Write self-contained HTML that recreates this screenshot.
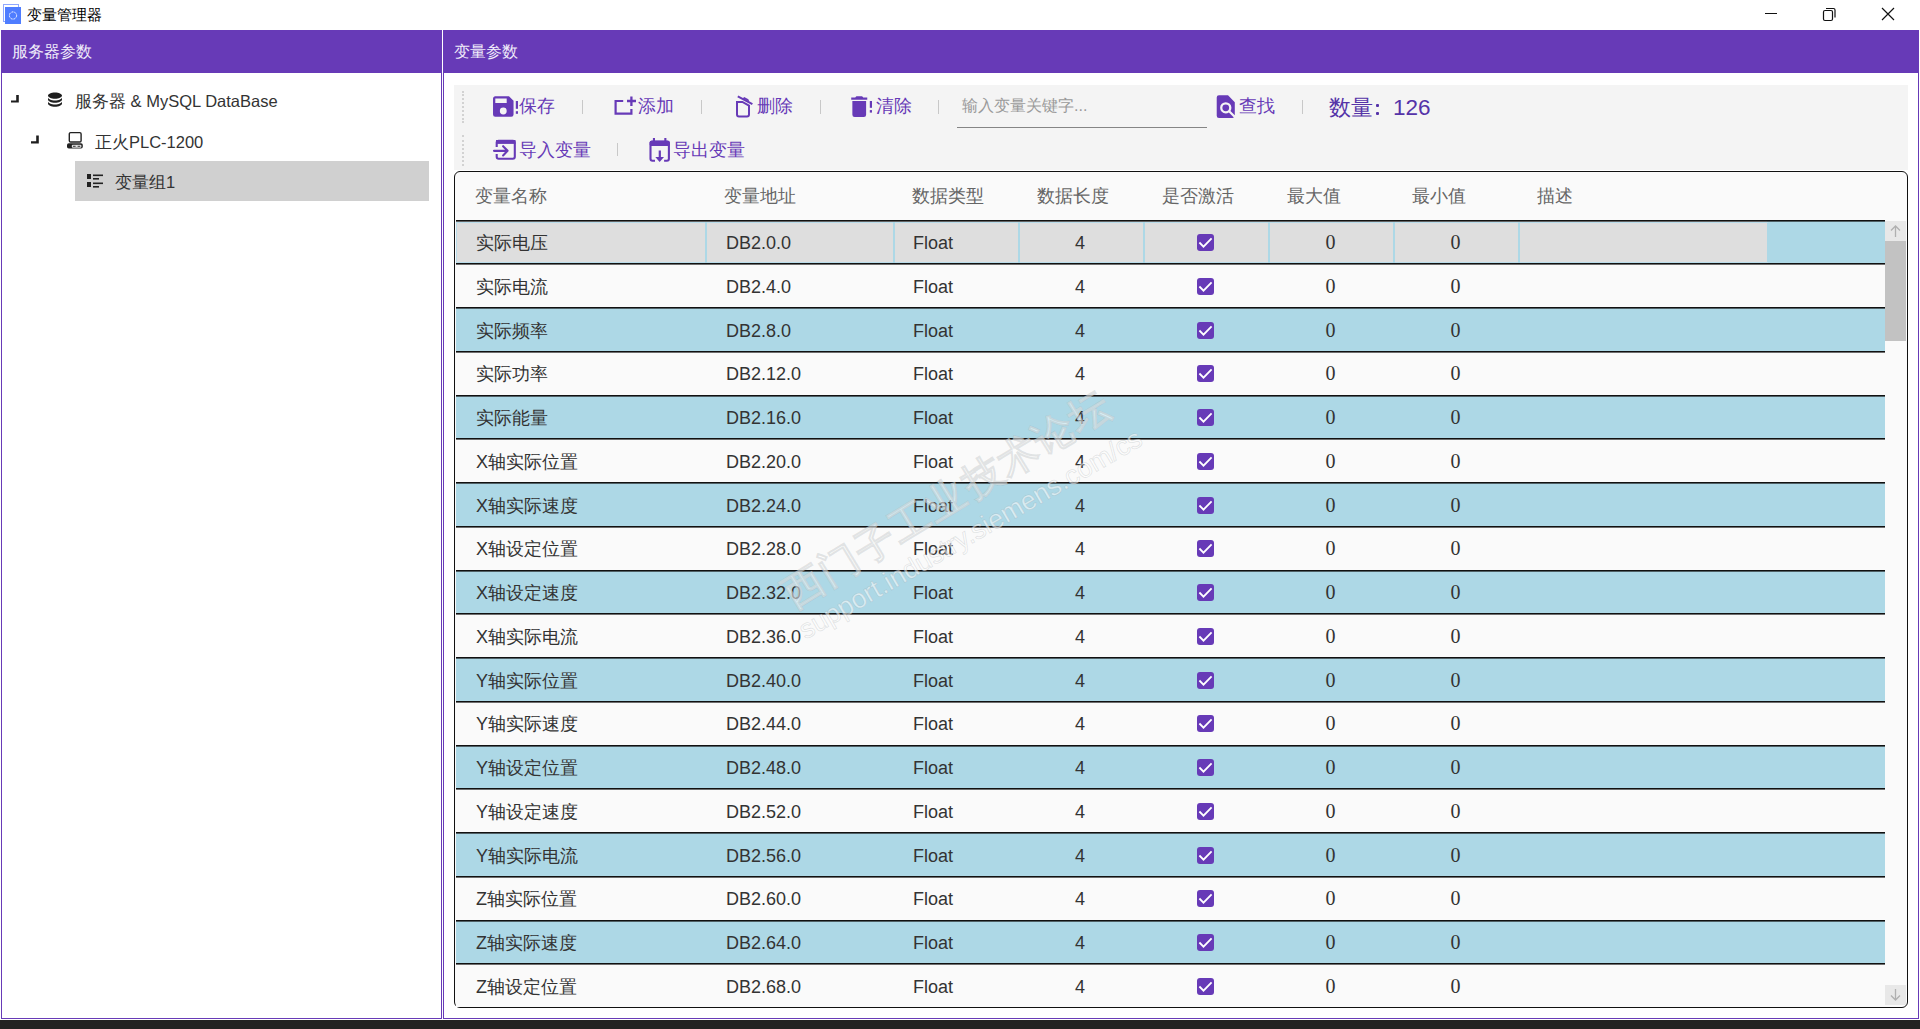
<!DOCTYPE html><html><head><meta charset="utf-8"><title>变量管理器</title><style>
*{margin:0;padding:0;box-sizing:border-box}
html,body{width:1920px;height:1029px;overflow:hidden;background:#fff;font-family:"Liberation Sans",sans-serif;position:relative}
.a{position:absolute}
.t{position:absolute;white-space:nowrap;line-height:1}
.row{position:absolute;left:456px;width:1429px;height:44px}
.ln{position:absolute;left:0;top:0;width:1429px;height:2px;background:linear-gradient(#111 50%,rgba(17,17,17,.6) 50%)}
.cell{position:absolute;white-space:nowrap;line-height:1;font-size:18px;color:#333}
.num{position:absolute;white-space:nowrap;line-height:1;font-family:"Liberation Serif",serif;font-size:20px;color:#333}
.chk{position:absolute;width:17px;height:17px;background:#673AB7;border-radius:3px}
.tb{position:absolute;white-space:nowrap;line-height:1;font-size:18px;color:#673AB7}
.sep{position:absolute;width:1px;height:14px;background:#c8c8c8}
.ic{position:absolute;left:0;top:0;overflow:visible}
</style></head><body>
<div class="a" style="left:3px;top:4px;width:16px;height:18px;border:1px solid #8fa8ff;background:#fff"></div>
<div class="a" style="left:5px;top:7px;width:16px;height:17px;background:#4f7dff"></div>
<svg class="a" style="left:8px;top:10px" width="10" height="11" viewBox="0 0 10 11"><circle cx="5" cy="5.5" r="3.6" fill="none" stroke="#fff" stroke-width="1" stroke-dasharray="2 1"/></svg>
<div class="t" style="left:27px;top:6.5px;font-size:15px;color:#000">变量管理器</div>
<div class="a" style="left:1765px;top:13px;width:12px;height:1px;background:#111"></div>
<svg class="a" style="left:1822px;top:6.5px" width="15" height="15" viewBox="0 0 15 15"><rect x="1.5" y="3.5" width="9" height="10" rx="1.5" fill="none" stroke="#111" stroke-width="1.2"/><path d="M4 1.5H11.5A1.5 1.5 0 0 1 13 3V10.5" fill="none" stroke="#111" stroke-width="1.2"/></svg>
<svg class="a" style="left:1881px;top:7px" width="14" height="14" viewBox="0 0 14 14"><path d="M1 1L13 13M13 1L1 13" stroke="#111" stroke-width="1.2"/></svg>
<div class="a" style="left:1px;top:30px;width:441px;height:989px;border:1px solid #673AB7;border-top:0"></div>
<div class="a" style="left:1px;top:30px;width:441px;height:43px;background:#673AB7"></div>
<div class="t" style="left:12px;top:44px;font-size:16px;color:#f0ecfa">服务器参数</div>
<div class="a" style="left:443px;top:30px;width:1476px;height:989px;border:1px solid #673AB7;border-top:0;border-left:1.5px solid #673AB7"></div>
<div class="a" style="left:443px;top:30px;width:1476px;height:43px;background:#673AB7"></div>
<div class="t" style="left:454px;top:44px;font-size:16px;color:#f0ecfa">变量参数</div>
<div class="a" style="left:0;top:1020px;width:1920px;height:9px;background:#222"></div>
<svg class="a" style="left:0;top:0" width="50" height="150" viewBox="0 0 50 150"><path fill="#1e1e1e" d="M11 100.4H16.2V95H18.8V102.6H11Z M31 141.2H36.2V135.6H38.8V143.4H31Z"/></svg>
<svg class="a" style="left:0;top:0" width="120" height="120" viewBox="0 0 120 120"><g transform="translate(44.5 90) scale(0.875 0.8)"><path fill="#1e1e1e" d="M12,3C7.58,3 4,4.79 4,7C4,9.21 7.58,11 12,11C16.42,11 20,9.21 20,7C20,4.79 16.42,3 12,3M4,9V12C4,14.21 7.58,16 12,16C16.42,16 20,14.21 20,12V9C20,11.21 16.42,13 12,13C7.58,13 4,11.21 4,9M4,14V17C4,19.21 7.58,21 12,21C16.42,21 20,19.21 20,17V14C20,16.21 16.42,18 12,18C7.58,18 4,16.21 4,14Z"/></g></svg>
<div class="t" style="left:75px;top:93px;font-size:16.5px;color:#333">服务器 &amp; MySQL DataBase</div>
<svg class="a" style="left:67px;top:131px" width="17" height="19" viewBox="0 0 17 19"><rect x="2.3" y="1.6" width="11.8" height="9.4" rx="1.3" fill="none" stroke="#222" stroke-width="1.4"/><rect x="0" y="12.3" width="15.8" height="5.3" rx="1.8" fill="#222"/><rect x="4.8" y="13.8" width="9.6" height="2.9" rx="1" fill="#e0e0e0"/><rect x="6" y="14.8" width="2.6" height="1" fill="#333"/><rect x="10.6" y="14.8" width="2.6" height="1" fill="#333"/></svg>
<div class="t" style="left:95px;top:134px;font-size:16.5px;color:#333">正火PLC-1200</div>
<div class="a" style="left:75px;top:161px;width:354px;height:40px;background:#d0d0d0"></div>
<svg class="a" style="left:86px;top:173px" width="18" height="16" viewBox="0 0 18 16"><rect x="1" y="1" width="4" height="5" fill="#222"/><rect x="1" y="9" width="4" height="5" fill="#222"/><rect x="7" y="1.5" width="10" height="1.6" fill="#222"/><rect x="7" y="5" width="6" height="1.6" fill="#222"/><rect x="7" y="9.5" width="10" height="1.6" fill="#222"/><rect x="7" y="13" width="6" height="1.6" fill="#222"/></svg>
<div class="t" style="left:115px;top:174px;font-size:16.5px;color:#333">变量组1</div>
<div class="a" style="left:454px;top:85px;width:1454px;height:85px;background:#f4f4f4"></div>
<div class="a" style="left:462px;top:91px;width:2px;height:32px;border-left:2px dotted #d2d2d2"></div>
<div class="a" style="left:462px;top:135px;width:2px;height:31px;border-left:2px dotted #d2d2d2"></div>
<svg class="ic" width="1920" height="200" viewBox="0 0 1920 200"><g transform="translate(489.6 92.8) scale(1.14)"><path fill="#673AB7" d="M15,9H5V5H15M12,19A3,3 0 0,1 9,16A3,3 0 0,1 12,13A3,3 0 0,1 15,16A3,3 0 0,1 12,19M17,3H5C3.89,3 3,3.9 3,5V19A2,2 0 0,0 5,21H19A2,2 0 0,0 21,19V7L17,3Z"/></g><rect x="515.8" y="101" width="2.2" height="7.8" fill="#673AB7"/><rect x="515.8" y="111.2" width="2.2" height="2.6" fill="#673AB7"/><path d="M623.2 101H615.6V113.7H631.4V109" fill="none" stroke="#673AB7" stroke-width="2.2"/><path d="M627 101H636M631.4 96.4V105.9" fill="none" stroke="#673AB7" stroke-width="2.3"/><path d="M737 102H742.4L749 105.7V114.5A2 2 0 0 1 747 116.5H739A2 2 0 0 1 737 114.5Z" fill="none" stroke="#673AB7" stroke-width="2"/><path d="M737.8 96.4L752.4 104.2" stroke="#673AB7" stroke-width="2"/><path d="M742.6 98.4L744.2 97.1L748.4 99.3L749.4 101.8Z" fill="#673AB7"/><g transform="translate(845.5 92.9) scale(1.145)"><path fill="#673AB7" d="M19,4H15.5L14.5,3H9.5L8.5,4H5V6H19M6,19A2,2 0 0,0 8,21H16A2,2 0 0,0 18,19V7H6V19Z"/></g><rect x="869.8" y="101" width="2.2" height="6.8" fill="#673AB7"/><rect x="869.8" y="110.1" width="2.2" height="2.5" fill="#673AB7"/><g transform="translate(1212.2 93.1) scale(1.13)"><path fill="#673AB7" d="M9,13A3,3 0 0,0 12,16A3,3 0 0,0 15,13A3,3 0 0,0 12,10A3,3 0 0,0 9,13M20,19.59V8L14,2H6A2,2 0 0,0 4,4V20A2,2 0 0,0 6,22H18C18.45,22 18.85,21.85 19.19,21.6L14.76,17.17C13.96,17.69 13,18 12,18A5,5 0 0,1 7,13A5,5 0 0,1 12,8A5,5 0 0,1 17,13C17,14 16.69,14.96 16.17,15.75L20,19.59Z"/></g><path d="M496.7 147.1V142A2 2 0 0 1 498.7 140.7H512.8A2 2 0 0 1 514.8 142.7V156.7A2 2 0 0 1 512.8 158.7H498.7A2 2 0 0 1 496.7 156.7V154.1" fill="none" stroke="#673AB7" stroke-width="2.1"/><rect x="496" y="140" width="19.5" height="3.9" fill="#673AB7"/><path d="M494 150.85H507M503.1 146.2L507.6 150.85L503.1 155.4" fill="none" stroke="#673AB7" stroke-width="2.1" stroke-linecap="round" stroke-linejoin="round"/><path d="M655 160.8H652.5A2 2 0 0 1 650.5 158.8V143.5A2 2 0 0 1 652.5 141.5H666.9A2 2 0 0 1 668.9 143.5V158.8A2 2 0 0 1 666.9 160.8H664.1" fill="none" stroke="#673AB7" stroke-width="2.1"/><rect x="649.7" y="140.8" width="20" height="5.2" rx="1.5" fill="#673AB7"/><rect x="652.9" y="138" width="2.1" height="3.5" fill="#673AB7"/><rect x="664.3" y="138" width="2.1" height="3.5" fill="#673AB7"/><rect x="658.7" y="150.5" width="2.2" height="7.5" fill="#673AB7"/><path d="M655.3 157.1H664L659.65 161.9Z" fill="#673AB7"/></svg>
<div class="tb" style="left:519px;top:97px">保存</div>
<div class="sep" style="left:582px;top:100px"></div>
<div class="tb" style="left:638px;top:97px">添加</div>
<div class="sep" style="left:701px;top:100px"></div>
<div class="tb" style="left:757px;top:97px">删除</div>
<div class="sep" style="left:820px;top:100px"></div>
<div class="tb" style="left:875.5px;top:97px">清除</div>
<div class="sep" style="left:938px;top:100px"></div>
<div class="t" style="left:962px;top:98px;font-size:16px;color:#9a9a9a">输入变量关键字...</div>
<div class="a" style="left:957px;top:126.5px;width:250px;height:1.5px;background:#858585"></div>
<div class="tb" style="left:1239px;top:97px">查找</div>
<div class="sep" style="left:1302px;top:100px"></div>
<div class="tb" style="left:1329px;top:97.5px;font-size:21.5px;color:#5533a8">数量</div>
<div class="a" style="left:1375.8px;top:104px;width:3px;height:3px;border-radius:1px;background:#5533a8"></div>
<div class="a" style="left:1375.8px;top:112px;width:3px;height:3px;border-radius:1px;background:#5533a8"></div>
<div class="tb" style="left:1393px;top:97px;font-size:22.5px;color:#5533a8">126</div>
<div class="tb" style="left:519px;top:141px">导入变量</div>
<div class="sep" style="left:617px;top:143px;height:13px"></div>
<div class="tb" style="left:673px;top:141px">导出变量</div>
<div class="a" style="left:454px;top:171px;width:1454px;height:837px;border:1.4px solid #111;border-radius:6px;background:#fafafa"></div>
<div class="t" style="left:475px;top:187px;font-size:18px;color:#666">变量名称</div>
<div class="t" style="left:724px;top:187px;font-size:18px;color:#666">变量地址</div>
<div class="t" style="left:912px;top:187px;font-size:18px;color:#666">数据类型</div>
<div class="t" style="left:1037px;top:187px;font-size:18px;color:#666">数据长度</div>
<div class="t" style="left:1162px;top:187px;font-size:18px;color:#666">是否激活</div>
<div class="t" style="left:1287px;top:187px;font-size:18px;color:#666">最大值</div>
<div class="t" style="left:1412px;top:187px;font-size:18px;color:#666">最小值</div>
<div class="t" style="left:1537px;top:187px;font-size:18px;color:#666">描述</div>
<div class="row" style="top:219.50px;background:#dedede">
<div class="a" style="left:1311px;top:0;width:118px;height:44px;background:#add8e6"></div>
<div class="a" style="left:0;top:2px;width:1312px;height:1px;background:#b9dcea"></div>
<div class="a" style="left:0;top:42px;width:1312px;height:1px;background:#b9dcea"></div>
<div class="a" style="left:0;top:2px;width:1px;height:41px;background:#b9dcea"></div>
<div class="a" style="left:248.5px;top:2px;width:2px;height:41px;background:#add8e6"></div>
<div class="a" style="left:436.5px;top:2px;width:2px;height:41px;background:#add8e6"></div>
<div class="a" style="left:561.5px;top:2px;width:2px;height:41px;background:#add8e6"></div>
<div class="a" style="left:686.5px;top:2px;width:2px;height:41px;background:#add8e6"></div>
<div class="a" style="left:811.5px;top:2px;width:2px;height:41px;background:#add8e6"></div>
<div class="a" style="left:936.5px;top:2px;width:2px;height:41px;background:#add8e6"></div>
<div class="a" style="left:1061.5px;top:2px;width:2px;height:41px;background:#add8e6"></div>
<div class="ln"></div>
<div class="cell" style="left:20px;top:14.5px">实际电压</div>
<div class="cell" style="left:270px;top:14.5px">DB2.0.0</div>
<div class="cell" style="left:457px;top:14.5px">Float</div>
<div class="cell" style="left:619px;top:14.5px">4</div>
<div class="chk" style="left:741px;top:14.5px"><svg width="17" height="17" viewBox="0 0 17 17" style="position:absolute;left:0;top:0"><path d="M2.4 8.5L6.5 12.6L14.6 4.3" fill="none" stroke="#fff" stroke-width="1.8"/></svg></div>
<div class="num" style="left:869.5px;top:12.5px">0</div>
<div class="num" style="left:994.5px;top:12.5px">0</div>
</div>
<div class="row" style="top:263.25px;background:#fafafa">
<div class="ln"></div>
<div class="cell" style="left:20px;top:14.5px">实际电流</div>
<div class="cell" style="left:270px;top:14.5px">DB2.4.0</div>
<div class="cell" style="left:457px;top:14.5px">Float</div>
<div class="cell" style="left:619px;top:14.5px">4</div>
<div class="chk" style="left:741px;top:14.5px"><svg width="17" height="17" viewBox="0 0 17 17" style="position:absolute;left:0;top:0"><path d="M2.4 8.5L6.5 12.6L14.6 4.3" fill="none" stroke="#fff" stroke-width="1.8"/></svg></div>
<div class="num" style="left:869.5px;top:12.5px">0</div>
<div class="num" style="left:994.5px;top:12.5px">0</div>
</div>
<div class="row" style="top:307.00px;background:#add8e6">
<div class="ln"></div>
<div class="cell" style="left:20px;top:14.5px">实际频率</div>
<div class="cell" style="left:270px;top:14.5px">DB2.8.0</div>
<div class="cell" style="left:457px;top:14.5px">Float</div>
<div class="cell" style="left:619px;top:14.5px">4</div>
<div class="chk" style="left:741px;top:14.5px"><svg width="17" height="17" viewBox="0 0 17 17" style="position:absolute;left:0;top:0"><path d="M2.4 8.5L6.5 12.6L14.6 4.3" fill="none" stroke="#fff" stroke-width="1.8"/></svg></div>
<div class="num" style="left:869.5px;top:12.5px">0</div>
<div class="num" style="left:994.5px;top:12.5px">0</div>
</div>
<div class="row" style="top:350.75px;background:#fafafa">
<div class="ln"></div>
<div class="cell" style="left:20px;top:14.5px">实际功率</div>
<div class="cell" style="left:270px;top:14.5px">DB2.12.0</div>
<div class="cell" style="left:457px;top:14.5px">Float</div>
<div class="cell" style="left:619px;top:14.5px">4</div>
<div class="chk" style="left:741px;top:14.5px"><svg width="17" height="17" viewBox="0 0 17 17" style="position:absolute;left:0;top:0"><path d="M2.4 8.5L6.5 12.6L14.6 4.3" fill="none" stroke="#fff" stroke-width="1.8"/></svg></div>
<div class="num" style="left:869.5px;top:12.5px">0</div>
<div class="num" style="left:994.5px;top:12.5px">0</div>
</div>
<div class="row" style="top:394.50px;background:#add8e6">
<div class="ln"></div>
<div class="cell" style="left:20px;top:14.5px">实际能量</div>
<div class="cell" style="left:270px;top:14.5px">DB2.16.0</div>
<div class="cell" style="left:457px;top:14.5px">Float</div>
<div class="cell" style="left:619px;top:14.5px">4</div>
<div class="chk" style="left:741px;top:14.5px"><svg width="17" height="17" viewBox="0 0 17 17" style="position:absolute;left:0;top:0"><path d="M2.4 8.5L6.5 12.6L14.6 4.3" fill="none" stroke="#fff" stroke-width="1.8"/></svg></div>
<div class="num" style="left:869.5px;top:12.5px">0</div>
<div class="num" style="left:994.5px;top:12.5px">0</div>
</div>
<div class="row" style="top:438.25px;background:#fafafa">
<div class="ln"></div>
<div class="cell" style="left:20px;top:14.5px">X轴实际位置</div>
<div class="cell" style="left:270px;top:14.5px">DB2.20.0</div>
<div class="cell" style="left:457px;top:14.5px">Float</div>
<div class="cell" style="left:619px;top:14.5px">4</div>
<div class="chk" style="left:741px;top:14.5px"><svg width="17" height="17" viewBox="0 0 17 17" style="position:absolute;left:0;top:0"><path d="M2.4 8.5L6.5 12.6L14.6 4.3" fill="none" stroke="#fff" stroke-width="1.8"/></svg></div>
<div class="num" style="left:869.5px;top:12.5px">0</div>
<div class="num" style="left:994.5px;top:12.5px">0</div>
</div>
<div class="row" style="top:482.00px;background:#add8e6">
<div class="ln"></div>
<div class="cell" style="left:20px;top:14.5px">X轴实际速度</div>
<div class="cell" style="left:270px;top:14.5px">DB2.24.0</div>
<div class="cell" style="left:457px;top:14.5px">Float</div>
<div class="cell" style="left:619px;top:14.5px">4</div>
<div class="chk" style="left:741px;top:14.5px"><svg width="17" height="17" viewBox="0 0 17 17" style="position:absolute;left:0;top:0"><path d="M2.4 8.5L6.5 12.6L14.6 4.3" fill="none" stroke="#fff" stroke-width="1.8"/></svg></div>
<div class="num" style="left:869.5px;top:12.5px">0</div>
<div class="num" style="left:994.5px;top:12.5px">0</div>
</div>
<div class="row" style="top:525.75px;background:#fafafa">
<div class="ln"></div>
<div class="cell" style="left:20px;top:14.5px">X轴设定位置</div>
<div class="cell" style="left:270px;top:14.5px">DB2.28.0</div>
<div class="cell" style="left:457px;top:14.5px">Float</div>
<div class="cell" style="left:619px;top:14.5px">4</div>
<div class="chk" style="left:741px;top:14.5px"><svg width="17" height="17" viewBox="0 0 17 17" style="position:absolute;left:0;top:0"><path d="M2.4 8.5L6.5 12.6L14.6 4.3" fill="none" stroke="#fff" stroke-width="1.8"/></svg></div>
<div class="num" style="left:869.5px;top:12.5px">0</div>
<div class="num" style="left:994.5px;top:12.5px">0</div>
</div>
<div class="row" style="top:569.50px;background:#add8e6">
<div class="ln"></div>
<div class="cell" style="left:20px;top:14.5px">X轴设定速度</div>
<div class="cell" style="left:270px;top:14.5px">DB2.32.0</div>
<div class="cell" style="left:457px;top:14.5px">Float</div>
<div class="cell" style="left:619px;top:14.5px">4</div>
<div class="chk" style="left:741px;top:14.5px"><svg width="17" height="17" viewBox="0 0 17 17" style="position:absolute;left:0;top:0"><path d="M2.4 8.5L6.5 12.6L14.6 4.3" fill="none" stroke="#fff" stroke-width="1.8"/></svg></div>
<div class="num" style="left:869.5px;top:12.5px">0</div>
<div class="num" style="left:994.5px;top:12.5px">0</div>
</div>
<div class="row" style="top:613.25px;background:#fafafa">
<div class="ln"></div>
<div class="cell" style="left:20px;top:14.5px">X轴实际电流</div>
<div class="cell" style="left:270px;top:14.5px">DB2.36.0</div>
<div class="cell" style="left:457px;top:14.5px">Float</div>
<div class="cell" style="left:619px;top:14.5px">4</div>
<div class="chk" style="left:741px;top:14.5px"><svg width="17" height="17" viewBox="0 0 17 17" style="position:absolute;left:0;top:0"><path d="M2.4 8.5L6.5 12.6L14.6 4.3" fill="none" stroke="#fff" stroke-width="1.8"/></svg></div>
<div class="num" style="left:869.5px;top:12.5px">0</div>
<div class="num" style="left:994.5px;top:12.5px">0</div>
</div>
<div class="row" style="top:657.00px;background:#add8e6">
<div class="ln"></div>
<div class="cell" style="left:20px;top:14.5px">Y轴实际位置</div>
<div class="cell" style="left:270px;top:14.5px">DB2.40.0</div>
<div class="cell" style="left:457px;top:14.5px">Float</div>
<div class="cell" style="left:619px;top:14.5px">4</div>
<div class="chk" style="left:741px;top:14.5px"><svg width="17" height="17" viewBox="0 0 17 17" style="position:absolute;left:0;top:0"><path d="M2.4 8.5L6.5 12.6L14.6 4.3" fill="none" stroke="#fff" stroke-width="1.8"/></svg></div>
<div class="num" style="left:869.5px;top:12.5px">0</div>
<div class="num" style="left:994.5px;top:12.5px">0</div>
</div>
<div class="row" style="top:700.75px;background:#fafafa">
<div class="ln"></div>
<div class="cell" style="left:20px;top:14.5px">Y轴实际速度</div>
<div class="cell" style="left:270px;top:14.5px">DB2.44.0</div>
<div class="cell" style="left:457px;top:14.5px">Float</div>
<div class="cell" style="left:619px;top:14.5px">4</div>
<div class="chk" style="left:741px;top:14.5px"><svg width="17" height="17" viewBox="0 0 17 17" style="position:absolute;left:0;top:0"><path d="M2.4 8.5L6.5 12.6L14.6 4.3" fill="none" stroke="#fff" stroke-width="1.8"/></svg></div>
<div class="num" style="left:869.5px;top:12.5px">0</div>
<div class="num" style="left:994.5px;top:12.5px">0</div>
</div>
<div class="row" style="top:744.50px;background:#add8e6">
<div class="ln"></div>
<div class="cell" style="left:20px;top:14.5px">Y轴设定位置</div>
<div class="cell" style="left:270px;top:14.5px">DB2.48.0</div>
<div class="cell" style="left:457px;top:14.5px">Float</div>
<div class="cell" style="left:619px;top:14.5px">4</div>
<div class="chk" style="left:741px;top:14.5px"><svg width="17" height="17" viewBox="0 0 17 17" style="position:absolute;left:0;top:0"><path d="M2.4 8.5L6.5 12.6L14.6 4.3" fill="none" stroke="#fff" stroke-width="1.8"/></svg></div>
<div class="num" style="left:869.5px;top:12.5px">0</div>
<div class="num" style="left:994.5px;top:12.5px">0</div>
</div>
<div class="row" style="top:788.25px;background:#fafafa">
<div class="ln"></div>
<div class="cell" style="left:20px;top:14.5px">Y轴设定速度</div>
<div class="cell" style="left:270px;top:14.5px">DB2.52.0</div>
<div class="cell" style="left:457px;top:14.5px">Float</div>
<div class="cell" style="left:619px;top:14.5px">4</div>
<div class="chk" style="left:741px;top:14.5px"><svg width="17" height="17" viewBox="0 0 17 17" style="position:absolute;left:0;top:0"><path d="M2.4 8.5L6.5 12.6L14.6 4.3" fill="none" stroke="#fff" stroke-width="1.8"/></svg></div>
<div class="num" style="left:869.5px;top:12.5px">0</div>
<div class="num" style="left:994.5px;top:12.5px">0</div>
</div>
<div class="row" style="top:832.00px;background:#add8e6">
<div class="ln"></div>
<div class="cell" style="left:20px;top:14.5px">Y轴实际电流</div>
<div class="cell" style="left:270px;top:14.5px">DB2.56.0</div>
<div class="cell" style="left:457px;top:14.5px">Float</div>
<div class="cell" style="left:619px;top:14.5px">4</div>
<div class="chk" style="left:741px;top:14.5px"><svg width="17" height="17" viewBox="0 0 17 17" style="position:absolute;left:0;top:0"><path d="M2.4 8.5L6.5 12.6L14.6 4.3" fill="none" stroke="#fff" stroke-width="1.8"/></svg></div>
<div class="num" style="left:869.5px;top:12.5px">0</div>
<div class="num" style="left:994.5px;top:12.5px">0</div>
</div>
<div class="row" style="top:875.75px;background:#fafafa">
<div class="ln"></div>
<div class="cell" style="left:20px;top:14.5px">Z轴实际位置</div>
<div class="cell" style="left:270px;top:14.5px">DB2.60.0</div>
<div class="cell" style="left:457px;top:14.5px">Float</div>
<div class="cell" style="left:619px;top:14.5px">4</div>
<div class="chk" style="left:741px;top:14.5px"><svg width="17" height="17" viewBox="0 0 17 17" style="position:absolute;left:0;top:0"><path d="M2.4 8.5L6.5 12.6L14.6 4.3" fill="none" stroke="#fff" stroke-width="1.8"/></svg></div>
<div class="num" style="left:869.5px;top:12.5px">0</div>
<div class="num" style="left:994.5px;top:12.5px">0</div>
</div>
<div class="row" style="top:919.50px;background:#add8e6">
<div class="ln"></div>
<div class="cell" style="left:20px;top:14.5px">Z轴实际速度</div>
<div class="cell" style="left:270px;top:14.5px">DB2.64.0</div>
<div class="cell" style="left:457px;top:14.5px">Float</div>
<div class="cell" style="left:619px;top:14.5px">4</div>
<div class="chk" style="left:741px;top:14.5px"><svg width="17" height="17" viewBox="0 0 17 17" style="position:absolute;left:0;top:0"><path d="M2.4 8.5L6.5 12.6L14.6 4.3" fill="none" stroke="#fff" stroke-width="1.8"/></svg></div>
<div class="num" style="left:869.5px;top:12.5px">0</div>
<div class="num" style="left:994.5px;top:12.5px">0</div>
</div>
<div class="row" style="top:963.25px;background:#fafafa">
<div class="ln"></div>
<div class="cell" style="left:20px;top:14.5px">Z轴设定位置</div>
<div class="cell" style="left:270px;top:14.5px">DB2.68.0</div>
<div class="cell" style="left:457px;top:14.5px">Float</div>
<div class="cell" style="left:619px;top:14.5px">4</div>
<div class="chk" style="left:741px;top:14.5px"><svg width="17" height="17" viewBox="0 0 17 17" style="position:absolute;left:0;top:0"><path d="M2.4 8.5L6.5 12.6L14.6 4.3" fill="none" stroke="#fff" stroke-width="1.8"/></svg></div>
<div class="num" style="left:869.5px;top:12.5px">0</div>
<div class="num" style="left:994.5px;top:12.5px">0</div>
</div>
<div class="a" style="left:1885px;top:221px;width:21px;height:20px;background:#e8e8e8"></div>
<svg class="a" style="left:1889px;top:224px" width="13" height="14" viewBox="0 0 13 14"><path d="M6.5 2V13M2 6.5L6.5 2L11 6.5" fill="none" stroke="#b0b0b0" stroke-width="1.3"/></svg>
<div class="a" style="left:1885px;top:241px;width:21px;height:100px;background:#c2c2c2"></div>
<div class="a" style="left:1885px;top:985px;width:21px;height:20px;background:#e8e8e8"></div>
<svg class="a" style="left:1889px;top:988px" width="13" height="14" viewBox="0 0 13 14"><path d="M6.5 1V12M2 7.5L6.5 12L11 7.5" fill="none" stroke="#b0b0b0" stroke-width="1.3"/></svg>
<div class="t" style="left:776px;top:580px;font-size:40px;font-weight:bold;letter-spacing:1.5px;word-spacing:-10px;color:rgba(255,255,255,0.55);-webkit-text-stroke:0.8px rgba(130,140,145,0.22);transform:rotate(-31.5deg);transform-origin:0 0">西门子工业 技术论坛</div>
<div class="t" style="left:808px;top:617px;font-size:27px;color:rgba(255,255,255,0.55);-webkit-text-stroke:0.8px rgba(130,140,145,0.22);transform:rotate(-30deg);transform-origin:0 100%">support.industry.siemens.com/cs</div>
</body></html>
